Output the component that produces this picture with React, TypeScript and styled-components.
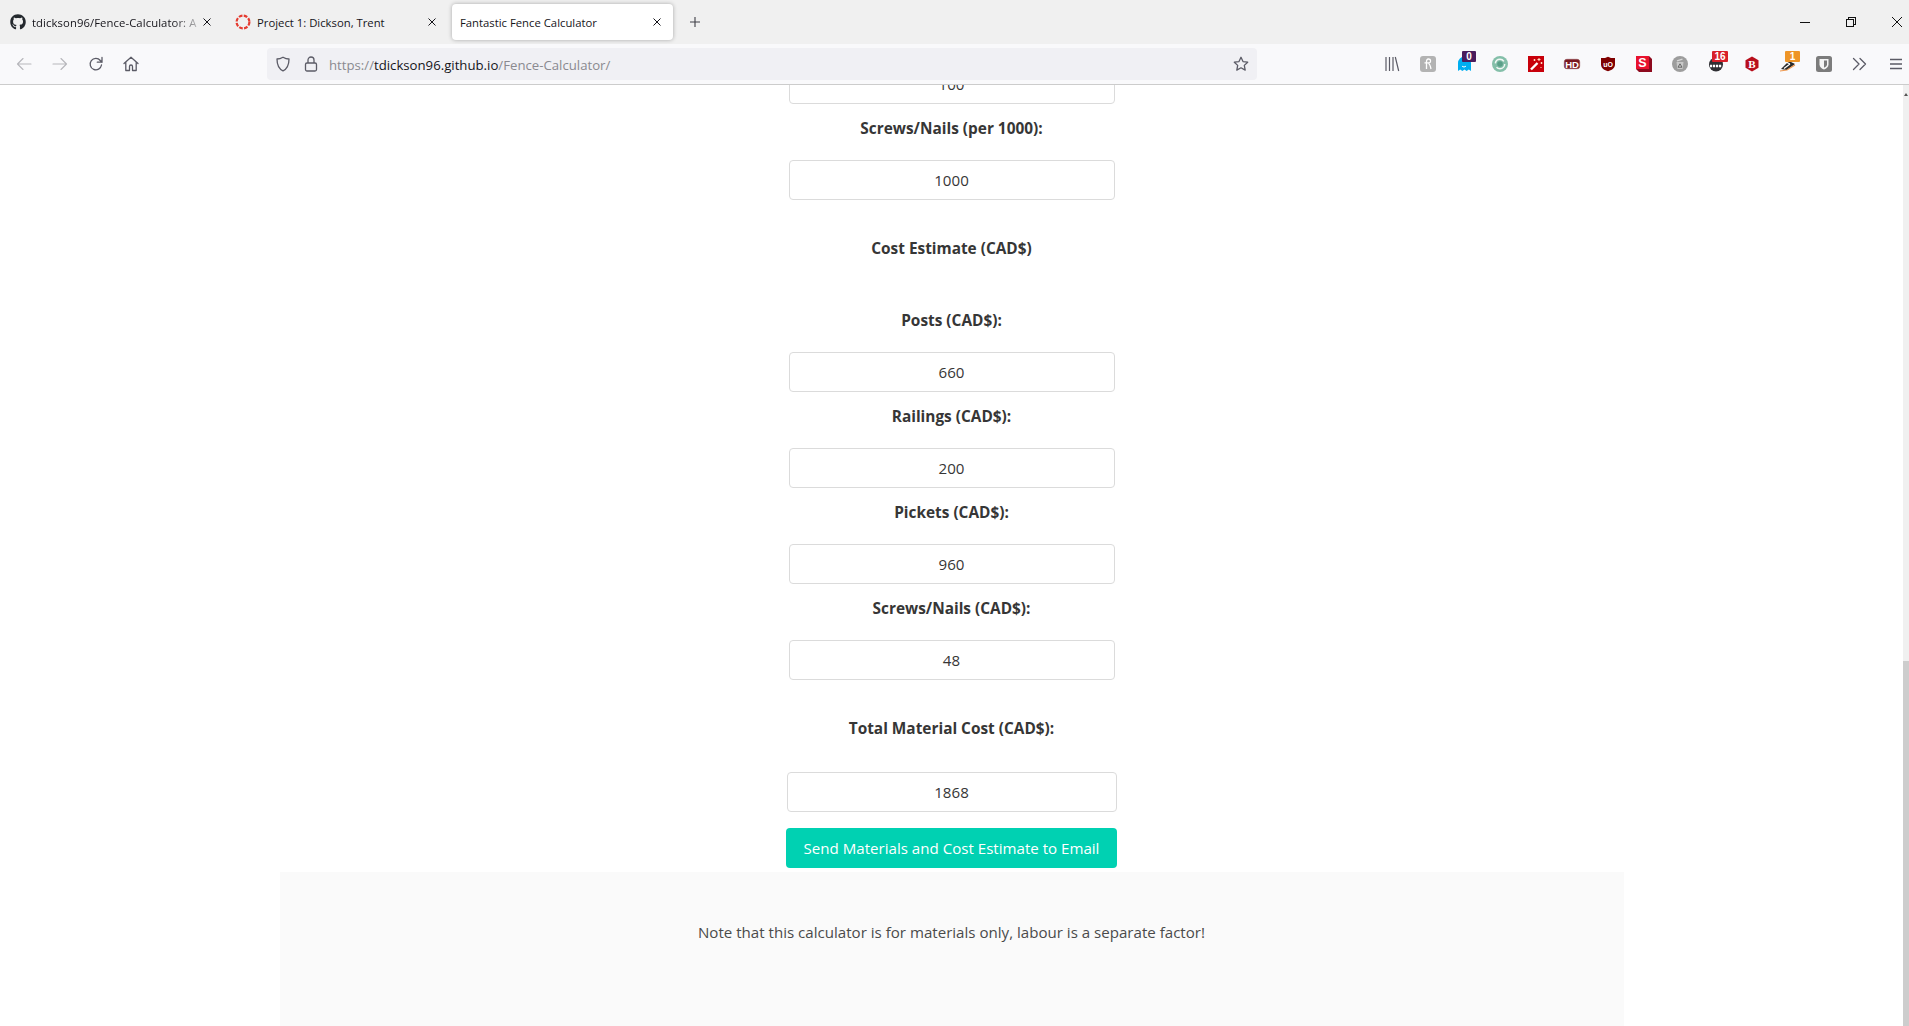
import React from 'react';
import styled, { createGlobalStyle } from 'styled-components';
import { FaGithub } from 'react-icons/fa';

const Global = createGlobalStyle`
  html, body { margin: 0; padding: 0; height: 100%; overflow: hidden; background: #fff; }
  #root { height: 100%; }
  * { box-sizing: border-box; }
`;

const uiFont = `"Open Sans", "Noto Sans", "Liberation Sans", sans-serif`;

const Frame = styled.div`
  display: flex;
  flex-direction: column;
  height: 100vh;
  font-family: ${uiFont};
`;

const TabBar = styled.div`
  display: flex;
  align-items: center;
  height: 44px;
  flex: none;
  padding-left: 2px;
  background: #f0f0f0;
`;

const Tab = styled.div<{ $active?: boolean }>`
  display: flex;
  align-items: center;
  width: 221px;
  height: 36px;
  margin-right: 4px;
  padding: 0 8px;
  border-radius: 4px;
  background: ${p => (p.$active ? '#ffffff' : 'transparent')};
  box-shadow: ${p => (p.$active ? '0 0 4px rgba(0,0,0,0.3)' : 'none')};
  color: #15141a;
  font-size: 11.3px;
`;

const Favicon = styled.span`
  display: flex;
  flex: none;
  width: 16px;
  height: 16px;
  margin-right: 6px;
  color: #24292e;
`;

const TabTitle = styled.span<{ $fade?: boolean }>`
  flex: 1;
  min-width: 0;
  white-space: nowrap;
  ${p =>
    p.$fade
      ? 'letter-spacing: 0.08px; mask-image: linear-gradient(to right, #000 84%, rgba(0,0,0,0.2) 100%);'
      : ''}
`;

const TabClose = styled.svg`
  flex: none;
  width: 8px;
  height: 8px;
  margin-left: 4px;
  margin-right: 4px;
  stroke: #15141a;
  stroke-width: 1;
  fill: none;
`;

const NewTab = styled.svg`
  flex: none;
  width: 10px;
  height: 10px;
  margin-left: 13px;
  stroke: #3f3f46;
  stroke-width: 1.1;
  fill: none;
`;

const WindowControls = styled.div`
  display: flex;
  align-items: center;
  gap: 36px;
  margin-left: auto;
  padding-right: 7px;
`;

const WindowIcon = styled.svg<{ $smooth?: boolean }>`
  display: block;
  width: 10px;
  height: 10px;
  stroke: #111;
  stroke-width: 1;
  fill: none;
  shape-rendering: ${p => (p.$smooth ? 'auto' : 'crispEdges')};
`;

const Toolbar = styled.div`
  display: flex;
  align-items: center;
  height: 41px;
  flex: none;
  padding: 0 5px 0 16px;
  background: #f9f9fb;
  border-bottom: 1px solid #cccccc;
`;

const NavGroup = styled.div`
  display: flex;
  align-items: center;
  gap: 19.8px;
`;

const NavIcon = styled.svg<{ $dim?: boolean; $flat?: boolean }>`
  display: block;
  flex: none;
  width: 16px;
  height: 16px;
  fill: none;
  stroke: ${p => (p.$dim ? '#b8b8bc' : '#5b5b66')};
  stroke-width: ${p => (p.$dim ? 1.15 : 1.3)};
  stroke-linecap: ${p => (p.$flat ? 'butt' : 'round')};
  stroke-linejoin: round;
`;

const UrlBar = styled.div`
  display: flex;
  align-items: center;
  width: 990px;
  height: 32px;
  margin-left: 127.6px;
  padding: 0 8px;
  border-radius: 4px;
  background: #f0f0f4;
  font-size: 13.2px;
  gap: 12px;
`;

const UrlText = styled.span`
  flex: 1;
  margin-left: -2px;
  padding-top: 1px;
  color: #8a8a90;
  white-space: nowrap;
`;

const UrlHost = styled.span`
  color: #15141a;
`;

const Extensions = styled.div`
  display: flex;
  align-items: center;
  gap: 20px;
  margin-left: auto;
`;

const ExtSlot = styled.div`
  position: relative;
  width: 16px;
  height: 16px;
  flex: none;
`;

const ExtIcon = styled.svg`
  display: block;
  width: 16px;
  height: 16px;
  overflow: visible;
`;

const Badge = styled.span<{ $color: string; $w: number }>`
  position: absolute;
  top: -5px;
  right: -4px;
  width: ${p => p.$w}px;
  height: 11px;
  border-radius: 1px;
  background: ${p => p.$color};
  color: #fff;
  font: 700 10px/11px "Liberation Sans", sans-serif;
  text-align: center;
`;

const Viewport = styled.div`
  flex: 1;
  min-height: 0;
  display: flex;
`;

const Page = styled.main`
  flex: 1;
  min-width: 0;
  overflow: hidden;
  display: flex;
  flex-direction: column;
  justify-content: flex-end;
  align-items: center;
  color: #363636;
  font-size: 15.1px;
`;

const Form = styled.section`
  display: flex;
  flex-direction: column;
  align-items: center;
  flex: none;
`;

const Label = styled.label<{ $before?: number; $after?: number }>`
  display: block;
  height: 24px;
  margin-top: ${p => p.$before ?? 12}px;
  margin-bottom: ${p => p.$after ?? 20}px;
  padding-top: 1px;
  font-size: 15.4px;
  font-weight: 700;
  line-height: 24px;
  text-align: center;
  white-space: nowrap;
`;

const Input = styled.input<{ $wide?: boolean }>`
  display: block;
  width: ${p => (p.$wide ? 330 : 326)}px;
  height: 40px;
  padding: 0;
  border: 1px solid #dbdbdb;
  border-radius: 4px;
  background: #fff;
  color: #363636;
  font-family: ${uiFont};
  font-size: 15.1px;
  text-align: center;
  outline: none;
`;

const SendButton = styled.button`
  display: block;
  width: 331px;
  height: 40px;
  margin-top: 16px;
  margin-bottom: 4px;
  padding: 0;
  border: 0;
  border-radius: 4px;
  background: #00d1b2;
  color: #fff;
  font-family: ${uiFont};
  font-size: 15.1px;
  white-space: nowrap;
`;

const Footer = styled.footer`
  flex: none;
  width: 1344px;
  height: 154px;
  padding-top: 48px;
  background: #fafafa;
  color: #4a4a4a;
  line-height: 24px;
  text-align: center;
`;

const Scrollbar = styled.div`
  flex: none;
  width: 6px;
  background: #f0f0f0;
  display: flex;
  flex-direction: column;
`;

const ScrollArrow = styled.div`
  flex: none;
  width: 0;
  height: 0;
  margin: 8px auto 0;
  border-left: 2px solid transparent;
  border-right: 2px solid transparent;
  border-bottom: 3px solid #555;
`;

const ScrollThumb = styled.div`
  flex: none;
  height: 365px;
  margin-top: auto;
  background: #cdcdcd;
`;

const RedDot = () => (
  <svg viewBox="0 0 16 16" width="16" height="16">
    <circle cx="8" cy="8" r="6.4" fill="none" stroke="#e53b30" strokeWidth="2.2" strokeDasharray="3.65 1.38" />
  </svg>
);

const CloseGlyph = () => (
  <TabClose viewBox="0 0 8 8"><path d="M.5.5l7 7M7.500.5l-7 7" /></TabClose>
);

const fields = [
  { label: 'Railings (CAD$):', value: '200' },
  { label: 'Pickets (CAD$):', value: '960' },
  { label: 'Screws/Nails (CAD$):', value: '48' },
];

export default function App() {
  return (
    <Frame>
      <Global />
      <TabBar>
        <Tab>
          <Favicon><FaGithub size={16} /></Favicon>
          <TabTitle $fade>tdickson96/Fence-Calculator: A</TabTitle>
          <CloseGlyph />
        </Tab>
        <Tab>
          <Favicon><RedDot /></Favicon>
          <TabTitle>Project 1: Dickson, Trent</TabTitle>
          <CloseGlyph />
        </Tab>
        <Tab $active>
          <TabTitle>Fantastic Fence Calculator</TabTitle>
          <CloseGlyph />
        </Tab>
        <NewTab viewBox="0 0 10 10"><path d="M5 0v10M0 5h10" /></NewTab>
        <WindowControls>
          <WindowIcon viewBox="0 0 10 10"><path d="M0 5.500h10" /></WindowIcon>
          <WindowIcon viewBox="0 0 10 10"><path d="M.5 2.500h7v7h-7zM2.500 2.500v-2h7v7h-2" /></WindowIcon>
          <WindowIcon $smooth viewBox="0 0 10 10"><path d="M0 0l10 10M10 0L0 10" /></WindowIcon>
        </WindowControls>
      </TabBar>
      <Toolbar>
        <NavGroup>
          <NavIcon $dim viewBox="0 0 16 16"><path d="M15 8H1.500M7 2.500L1.500 8 7 13.500" /></NavIcon>
          <NavIcon $dim viewBox="0 0 16 16"><path d="M1 8h13.500M9 2.500L14.500 8 9 13.500" /></NavIcon>
          <NavIcon viewBox="0 0 16 16"><path d="M13.500 9a5.700 5.700 0 1 1-1.200-4.500L14 6.200M14 1.500v4.700H9.300" /></NavIcon>
          <NavIcon viewBox="0 0 16 16"><path d="M1 7.500L8 1.200l7 6.300M2.800 6.200V14.500h3.700V10.500a1.500 1.500 0 0 1 3 0v4h3.700V6.200" /></NavIcon>
        </NavGroup>
        <UrlBar>
          <NavIcon viewBox="0 0 16 16"><path d="M8 1.200c2 1.200 4 1.800 6 1.800 0 6-2 10-6 11.800C4 13 2 9 2 3c2 0 4-.6 6-1.800z" /></NavIcon>
          <NavIcon viewBox="0 0 16 16"><path d="M2.500 8.500a1.500 1.500 0 0 1 1.500-1.500h8a1.500 1.500 0 0 1 1.500 1.500v5a1.500 1.500 0 0 1-1.500 1.500H4a1.500 1.500 0 0 1-1.500-1.500zM5 7V4a3 3 0 0 1 6 0v3" /></NavIcon>
          <UrlText>https://<UrlHost>tdickson96.github.io</UrlHost>/Fence-Calculator/</UrlText>
          <NavIcon viewBox="0 0 16 16"><path d="M8 1.300l2 4.300 4.700.6-3.400 3.200.9 4.700L8 11.800l-4.200 2.300.9-4.700L1.300 6.200 6 5.600z" /></NavIcon>
        </UrlBar>
        <Extensions>
          <ExtSlot><ExtIcon viewBox="0 0 16 16"><path d="M2 1v14M5.500 1v14M9 1v14M11.300 1l3.400 14" stroke="#5b5b66" strokeWidth="1.200" fill="none" /></ExtIcon></ExtSlot>
          <ExtSlot><ExtIcon viewBox="0 0 16 16"><rect width="16" height="16" rx="3" fill="#b3b3b3" /><path d="M4.500 6.800h4.500c2 0 2.300-3.600-.2-3.800-2-.1-2.300 1.400-2.300 2.800V13M8.500 7.500c1.500.5 2 3 2.500 5.500" stroke="#fff" strokeWidth="1.300" fill="none" /></ExtIcon></ExtSlot>
          <ExtSlot>
            <ExtIcon viewBox="0 0 16 16"><path d="M2 15V7a6.500 6.500 0 0 1 13 0v8l-2.200-1.500L10.600 15l-2.100-1.500L6.400 15l-2.200-1.500z" fill="#00aef0" /><path d="M6 10c1 1.300 3 1.300 4 0" stroke="#fff" strokeWidth="1" fill="none" /></ExtIcon>
            <Badge $color="#4a1c5c" $w={14}>0</Badge>
          </ExtSlot>
          <ExtSlot><ExtIcon viewBox="0 0 16 16"><circle cx="8" cy="8" r="8" fill="#84bfa9" /><circle cx="8" cy="8" r="4.700" fill="none" stroke="#f2f8f5" strokeWidth="1.500" strokeDasharray="11 4" /><circle cx="8" cy="8" r="2.800" fill="#5a9f88" /></ExtIcon></ExtSlot>
          <ExtSlot><ExtIcon viewBox="0 0 16 16"><rect width="16" height="16" fill="#c8000a" /><path d="M3 13.500l6.500-6.500" stroke="#fff" strokeWidth="2.400" /><path d="M11 2v3M9.500 3.500h3M13.500 6v2M12.500 7h2M6.500 3v2M5.500 4h2M13 11v1" stroke="#ffdcc0" strokeWidth="1" /></ExtIcon></ExtSlot>
          <ExtSlot><ExtIcon viewBox="0 0 16 16"><rect x=".3" y="3.300" width="15.400" height="9.400" rx="2.500" fill="#7a1820" stroke="#8f4a50" strokeWidth=".6" /><text x="8" y="11.700" textAnchor="middle" fontFamily="Liberation Sans" fontWeight="700" fontSize="9.500" fill="#fff">HD</text></ExtIcon></ExtSlot>
          <ExtSlot><ExtIcon viewBox="0 0 16 16"><path d="M8 .8l3 1.200h4v6.500C15 12 11.500 14.500 8 15.200 4.500 14.500 1 12 1 8.500V2h4z" fill="#800000" /><text x="8" y="10.500" textAnchor="middle" fontFamily="Liberation Sans" fontWeight="700" fontSize="7" fill="#fff">uO</text></ExtIcon></ExtSlot>
          <ExtSlot><ExtIcon viewBox="0 0 16 16"><path d="M0 0h13l3 3v13H3l-3-3z" fill="#8e0a1e" /><rect width="13" height="13" fill="#e8112d" /><text x="6.500" y="11.300" textAnchor="middle" fontFamily="Liberation Sans" fontWeight="700" fontSize="12.500" fill="#fff">S</text></ExtIcon></ExtSlot>
          <ExtSlot><ExtIcon viewBox="0 0 16 16"><circle cx="8" cy="8" r="8" fill="#9d9d9d" /><path d="M4.500 6h7l-.9 7H5.400z" fill="#c9c9c9" /><path d="M5 4.800l5.500-1.600" stroke="#d8d8d8" strokeWidth="1.200" /><path d="M8 7.800l2 3.400H6z" fill="none" stroke="#666" strokeWidth="1" /></ExtIcon></ExtSlot>
          <ExtSlot>
            <ExtIcon viewBox="0 0 16 16"><circle cx="8" cy="8.500" r="7" fill="#2f2f33" /><path d="M2 10h12" stroke="#fff" strokeWidth="2.600" strokeDasharray="2.200 .8" /></ExtIcon>
            <Badge $color="#d8202a" $w={16}>16</Badge>
          </ExtSlot>
          <ExtSlot><ExtIcon viewBox="0 0 16 16"><path d="M8 .5l6.500 3.700v7.600L8 15.500l-6.500-3.700V4.200z" fill="#b80f1c" /><text x="8" y="11.800" textAnchor="middle" fontFamily="Liberation Serif" fontWeight="700" fontSize="11" fill="#fff">B</text></ExtIcon></ExtSlot>
          <ExtSlot>
            <ExtIcon viewBox="0 0 16 16"><path d="M1 13l8-8 6 3-8 6z" fill="#2a2a2a" /><path d="M0 15l7-1 8-5" stroke="#ee9a52" strokeWidth="1.200" fill="none" /><path d="M4 12.500l6-4.500M7 6.500l3 1.500" stroke="#fff" strokeWidth="1.200" /></ExtIcon>
            <Badge $color="#ee9527" $w={15}>1</Badge>
          </ExtSlot>
          <ExtSlot><ExtIcon viewBox="0 0 16 16"><rect width="16" height="16" rx="2.500" fill="#7c7c7c" /><path d="M3.500 3h9v5.500c0 2.500-2 4-4.500 5-2.500-1-4.500-2.500-4.500-5z" fill="#f5f5f5" /><path d="M8 4.500h3v4c0 1.500-1.500 2.500-3 3.200z" fill="#7c7c7c" /></ExtIcon></ExtSlot>
          <ExtSlot><NavIcon viewBox="0 0 16 16"><path d="M1.500 2.500L7 8l-5.500 5.500M8 2.500L13.500 8 8 13.500" /></NavIcon></ExtSlot>
          <ExtSlot><NavIcon $flat viewBox="0 0 16 16"><path d="M2 3.500h12M2 8h12M2 12.500h12" /></NavIcon></ExtSlot>
        </Extensions>
      </Toolbar>
      <Viewport>
        <Page>
          <Form>
            <Input readOnly value="100" />
            <Label>Screws/Nails (per 1000):</Label>
            <Input readOnly value="1000" />
            <Label $before={36} $after={48}>Cost Estimate (CAD$)</Label>
            <Label $before={0}>Posts (CAD$):</Label>
            <Input readOnly value="660" />
            {fields.map(f => (
              <React.Fragment key={f.label}>
                <Label>{f.label}</Label>
                <Input readOnly value={f.value} />
              </React.Fragment>
            ))}
            <Label $before={36} $after={32}>Total Material Cost (CAD$):</Label>
            <Input $wide readOnly value="1868" />
            <SendButton>Send Materials and Cost Estimate to Email</SendButton>
          </Form>
          <Footer>Note that this calculator is for materials only, labour is a separate factor!</Footer>
        </Page>
        <Scrollbar>
          <ScrollArrow />
          <ScrollThumb />
        </Scrollbar>
      </Viewport>
    </Frame>
  );
}
